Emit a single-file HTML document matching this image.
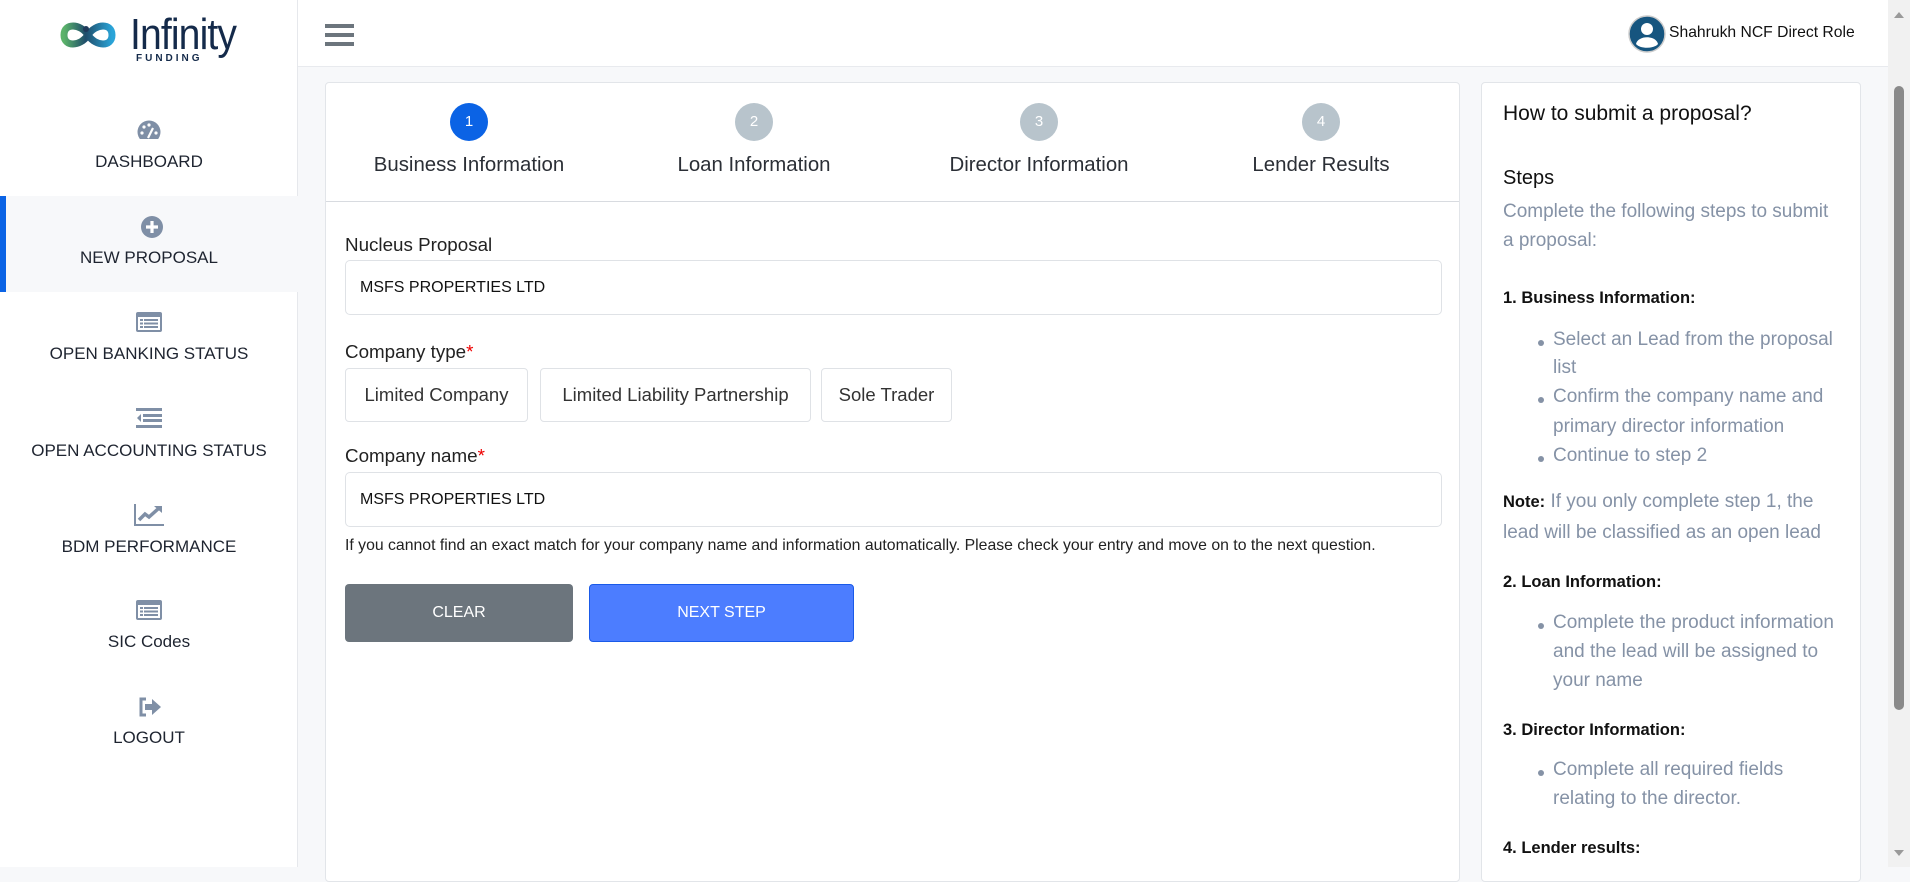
<!DOCTYPE html>
<html><head><meta charset="utf-8"><style>
*{box-sizing:border-box;margin:0;padding:0}
body{width:1910px;height:867px;overflow:hidden;background:#f7f8fa;font-family:"Liberation Sans",sans-serif;color:#212529;position:relative}
.a{position:absolute;white-space:nowrap}
#side{position:absolute;left:0;top:0;width:298px;height:867px;background:#fff;border-right:1px solid #e6e8ec}
.nav{position:absolute;left:0;width:298px;text-align:center;font-size:17px;color:#1e2430}
.ic{position:absolute;left:138px}
#top{position:absolute;left:298px;top:0;width:1590px;height:67px;background:#fff;border-bottom:1px solid #e8eaee}
.card{position:absolute;background:#fff;border:1px solid #e2e5e9;border-radius:4px}
.circ{position:absolute;width:38px;height:38px;border-radius:50%;color:#fff;font-size:15px;text-align:center;line-height:38px;background:#b8c4cc}
.lbl{position:absolute;font-size:20.4px;color:#2b2f36;transform:translateX(-50%);white-space:nowrap}
.inp{position:absolute;border:1px solid #dfe2e6;border-radius:5px;font-size:16px;color:#111;padding-left:14px;line-height:53px}
.opt{position:absolute;border:1px solid #dfe2e6;border-radius:4px;font-size:18.5px;color:#333;text-align:center;line-height:52px}
.g{color:#8592a6;font-size:19px}
.b{color:#111;font-size:16.5px;font-weight:bold}
.dot{position:absolute;width:6px;height:6px;border-radius:50%;background:#8592a6}
</style></head><body>
<div id="side">
 <svg class="a" style="left:58px;top:15px" width="60" height="40" viewBox="0 0 60 40">
  <defs><linearGradient id="lg" x1="0" x2="1"><stop offset="0" stop-color="#5bb36a"/><stop offset=".45" stop-color="#1f4e6b"/><stop offset="1" stop-color="#2aa4d8"/></linearGradient></defs>
  <path d="M30 20 C22 8 6 8 6 20 C6 32 22 32 30 20 C38 8 54 8 54 20 C54 32 38 32 30 20" fill="none" stroke="url(#lg)" stroke-width="7"/>
  <circle cx="28" cy="14" r="3" fill="#1f3a5a"/>
 </svg>
 <div class="a" style="left:130px;top:10px;font-size:44px;color:#142a4a;letter-spacing:-1px;transform:scaleX(0.89);transform-origin:left">Infinity</div>
 <div class="a" style="left:136px;top:53px;font-size:10px;color:#142a4a;letter-spacing:3px;font-weight:bold">FUNDING</div>

 <svg class="ic" style="top:120px;left:136px" width="26" height="22" viewBox="0 0 26 22"><circle cx="13" cy="12" r="11.5" fill="#7f8fa6"/><rect x="0" y="19" width="26" height="4" fill="#fff"/><circle cx="6" cy="13" r="1.6" fill="#fff"/><circle cx="8" cy="7" r="1.6" fill="#fff"/><circle cx="13" cy="5" r="1.6" fill="#fff"/><circle cx="20" cy="13" r="1.6" fill="#fff"/><path d="M12 18 L17 8" stroke="#fff" stroke-width="2.2"/></svg>
 <div class="nav" style="top:152px">DASHBOARD</div>

 <div class="a" style="left:0;top:196px;width:298px;height:96px;background:#f7f8fa"></div>
 <div class="a" style="left:0;top:196px;width:6px;height:96px;background:#0b63e5"></div>
 <svg class="ic" style="top:216px;left:141px" width="22" height="22" viewBox="0 0 22 22"><circle cx="11" cy="11" r="11" fill="#7f8fa6"/><path d="M11 5v12M5 11h12" stroke="#fff" stroke-width="3.2"/></svg>
 <div class="nav" style="top:248px">NEW PROPOSAL</div>

 <svg class="ic" style="top:312px;left:136px" width="26" height="20" viewBox="0 0 26 20"><rect x="0" y="0" width="26" height="20" rx="2" fill="#7f8fa6"/><rect x="2" y="5" width="22" height="13" fill="#fff"/><g fill="#7f8fa6"><rect x="4" y="7" width="3" height="2"/><rect x="8" y="7" width="14" height="2"/><rect x="4" y="10.5" width="3" height="2"/><rect x="8" y="10.5" width="14" height="2"/><rect x="4" y="14" width="3" height="2"/><rect x="8" y="14" width="14" height="2"/></g></svg>
 <div class="nav" style="top:344px">OPEN BANKING STATUS</div>

 <svg class="ic" style="top:408px;left:136px" width="26" height="20" viewBox="0 0 26 20"><g fill="#7f8fa6"><rect x="0" y="0" width="26" height="3"/><rect x="7" y="6" width="19" height="3"/><rect x="7" y="11" width="19" height="3"/><rect x="0" y="17" width="26" height="3"/><path d="M5 6 L1 10 L5 14Z"/></g></svg>
 <div class="nav" style="top:441px">OPEN ACCOUNTING STATUS</div>

 <svg class="ic" style="top:504px;left:134px" width="30" height="22" viewBox="0 0 30 22"><path d="M1 0V21H30" stroke="#7f8fa6" stroke-width="2" fill="none"/><path d="M5 16 L11 10 L15 13 L24 5" stroke="#7f8fa6" stroke-width="3.5" fill="none"/><path d="M20 2 L28 2 L28 9Z" fill="#7f8fa6"/></svg>
 <div class="nav" style="top:537px">BDM PERFORMANCE</div>

 <svg class="ic" style="top:600px;left:136px" width="26" height="20" viewBox="0 0 26 20"><rect x="0" y="0" width="26" height="20" rx="2" fill="#7f8fa6"/><rect x="2" y="5" width="22" height="13" fill="#fff"/><g fill="#7f8fa6"><rect x="4" y="7" width="3" height="2"/><rect x="8" y="7" width="14" height="2"/><rect x="4" y="10.5" width="3" height="2"/><rect x="8" y="10.5" width="14" height="2"/><rect x="4" y="14" width="3" height="2"/><rect x="8" y="14" width="14" height="2"/></g></svg>
 <div class="nav" style="top:632px">SIC Codes</div>

 <svg class="ic" style="top:697px;left:138px" width="24" height="20" viewBox="0 0 24 20"><path d="M8 2H3V18H8" stroke="#7f8fa6" stroke-width="3" fill="none"/><path d="M7 7H14V2L23 10L14 18V13H7Z" fill="#7f8fa6"/></svg>
 <div class="nav" style="top:728px">LOGOUT</div>
</div>

<div id="top">
 <div class="a" style="left:27px;top:24px;width:29px;height:4px;background:#6c757d;box-shadow:0 9px 0 #6c757d,0 18px 0 #6c757d"></div>
 <svg class="a" style="left:1330px;top:15px" width="38" height="38" viewBox="0 0 38 38"><circle cx="19" cy="19" r="18" fill="#16557f" stroke="#ccc" stroke-width="1.5"/><circle cx="19" cy="14" r="6" fill="#fff"/><path d="M8 29 C10 20 28 20 30 29 C26 34 12 34 8 29Z" fill="#fff"/></svg>
 <div class="a" style="left:1371px;top:24px;font-size:15.7px;color:#111">Shahrukh NCF Direct Role</div>
</div>

<div class="a" style="left:1888px;top:0;width:22px;height:867px;background:#f1f1f1"></div>
<div class="a" style="left:1894px;top:86px;width:10px;height:624px;background:#8a8a8a;border-radius:5px"></div>
<div class="a" style="left:1894px;top:12px;border:5px solid transparent;border-bottom:6px solid #9a9a9a;border-top:0"></div>
<div class="a" style="left:1894px;top:850px;border:5px solid transparent;border-top:6px solid #9a9a9a;border-bottom:0"></div>

<div class="card" style="left:325px;top:82px;width:1135px;height:800px">
 <div class="circ" style="left:124px;top:20px;background:#0b63e5">1</div>
 <div class="circ" style="left:409px;top:20px">2</div>
 <div class="circ" style="left:694px;top:20px">3</div>
 <div class="circ" style="left:976px;top:20px">4</div>
 <div class="lbl" style="left:143px;top:71px">Business Information</div>
 <div class="lbl" style="left:428px;top:71px">Loan Information</div>
 <div class="lbl" style="left:713px;top:71px">Director Information</div>
 <div class="lbl" style="left:995px;top:71px">Lender Results</div>
 <div class="a" style="left:0;top:118px;width:1133px;height:1px;background:#d8dbe0"></div>

 <div class="a" style="left:19px;top:151px;font-size:18.8px;color:#222">Nucleus Proposal</div>
 <div class="inp" style="left:19px;top:177px;width:1097px;height:55px">MSFS PROPERTIES LTD</div>
 <div class="a" style="left:19px;top:258px;font-size:18.8px;color:#222">Company type<span style="color:#e00">*</span></div>
 <div class="opt" style="left:19px;top:285px;width:183px;height:54px">Limited Company</div>
 <div class="opt" style="left:214px;top:285px;width:271px;height:54px">Limited Liability Partnership</div>
 <div class="opt" style="left:495px;top:285px;width:131px;height:54px">Sole Trader</div>
 <div class="a" style="left:19px;top:362px;font-size:18.8px;color:#222">Company name<span style="color:#e00">*</span></div>
 <div class="inp" style="left:19px;top:389px;width:1097px;height:55px">MSFS PROPERTIES LTD</div>
 <div class="a" style="left:19px;top:454px;font-size:15.8px;color:#222">If you cannot find an exact match for your company name and information automatically. Please check your entry and move on to the next question.</div>
 <div class="a" style="left:19px;top:501px;width:228px;height:58px;background:#6c757d;border-radius:4px;color:#fff;font-size:16px;text-align:center;line-height:58px">CLEAR</div>
 <div class="a" style="left:263px;top:501px;width:265px;height:58px;background:#4c7dff;border:1px solid #1a5ae8;border-radius:4px;color:#fff;font-size:16px;text-align:center;line-height:56px">NEXT STEP</div>
</div>

<div class="card" style="left:1481px;top:82px;width:380px;height:800px">
 <div class="a" style="left:21px;top:19px;font-size:21px;color:#111">How to submit a proposal?</div>
 <div class="a" style="left:21px;top:84px;font-size:20px;color:#111">Steps</div>
 <div class="a g" style="left:21px;top:118px">Complete the following steps to submit</div>
 <div class="a g" style="left:21px;top:147px">a proposal:</div>
 <div class="a b" style="left:21px;top:206px">1. Business Information:</div>
 <div class="dot" style="left:56px;top:257px"></div><div class="a g" style="left:71px;top:246px">Select an Lead from the proposal</div>
 <div class="a g" style="left:71px;top:274px">list</div>
 <div class="dot" style="left:56px;top:314px"></div><div class="a g" style="left:71px;top:303px">Confirm the company name and</div>
 <div class="a g" style="left:71px;top:333px">primary director information</div>
 <div class="dot" style="left:56px;top:373px"></div><div class="a g" style="left:71px;top:362px">Continue to step 2</div>
 <div class="a g" style="left:21px;top:408px"><b style="color:#111;font-size:16.5px">Note:</b> If you only complete step 1, the</div>
 <div class="a g" style="left:21px;top:439px">lead will be classified as an open lead</div>
 <div class="a b" style="left:21px;top:490px">2. Loan Information:</div>
 <div class="dot" style="left:56px;top:540px"></div><div class="a g" style="left:71px;top:529px">Complete the product information</div>
 <div class="a g" style="left:71px;top:558px">and the lead will be assigned to</div>
 <div class="a g" style="left:71px;top:587px">your name</div>
 <div class="a b" style="left:21px;top:638px">3. Director Information:</div>
 <div class="dot" style="left:56px;top:687px"></div><div class="a g" style="left:71px;top:676px">Complete all required fields</div>
 <div class="a g" style="left:71px;top:705px">relating to the director.</div>
 <div class="a b" style="left:21px;top:756px">4. Lender results:</div>
</div>
</body></html>
